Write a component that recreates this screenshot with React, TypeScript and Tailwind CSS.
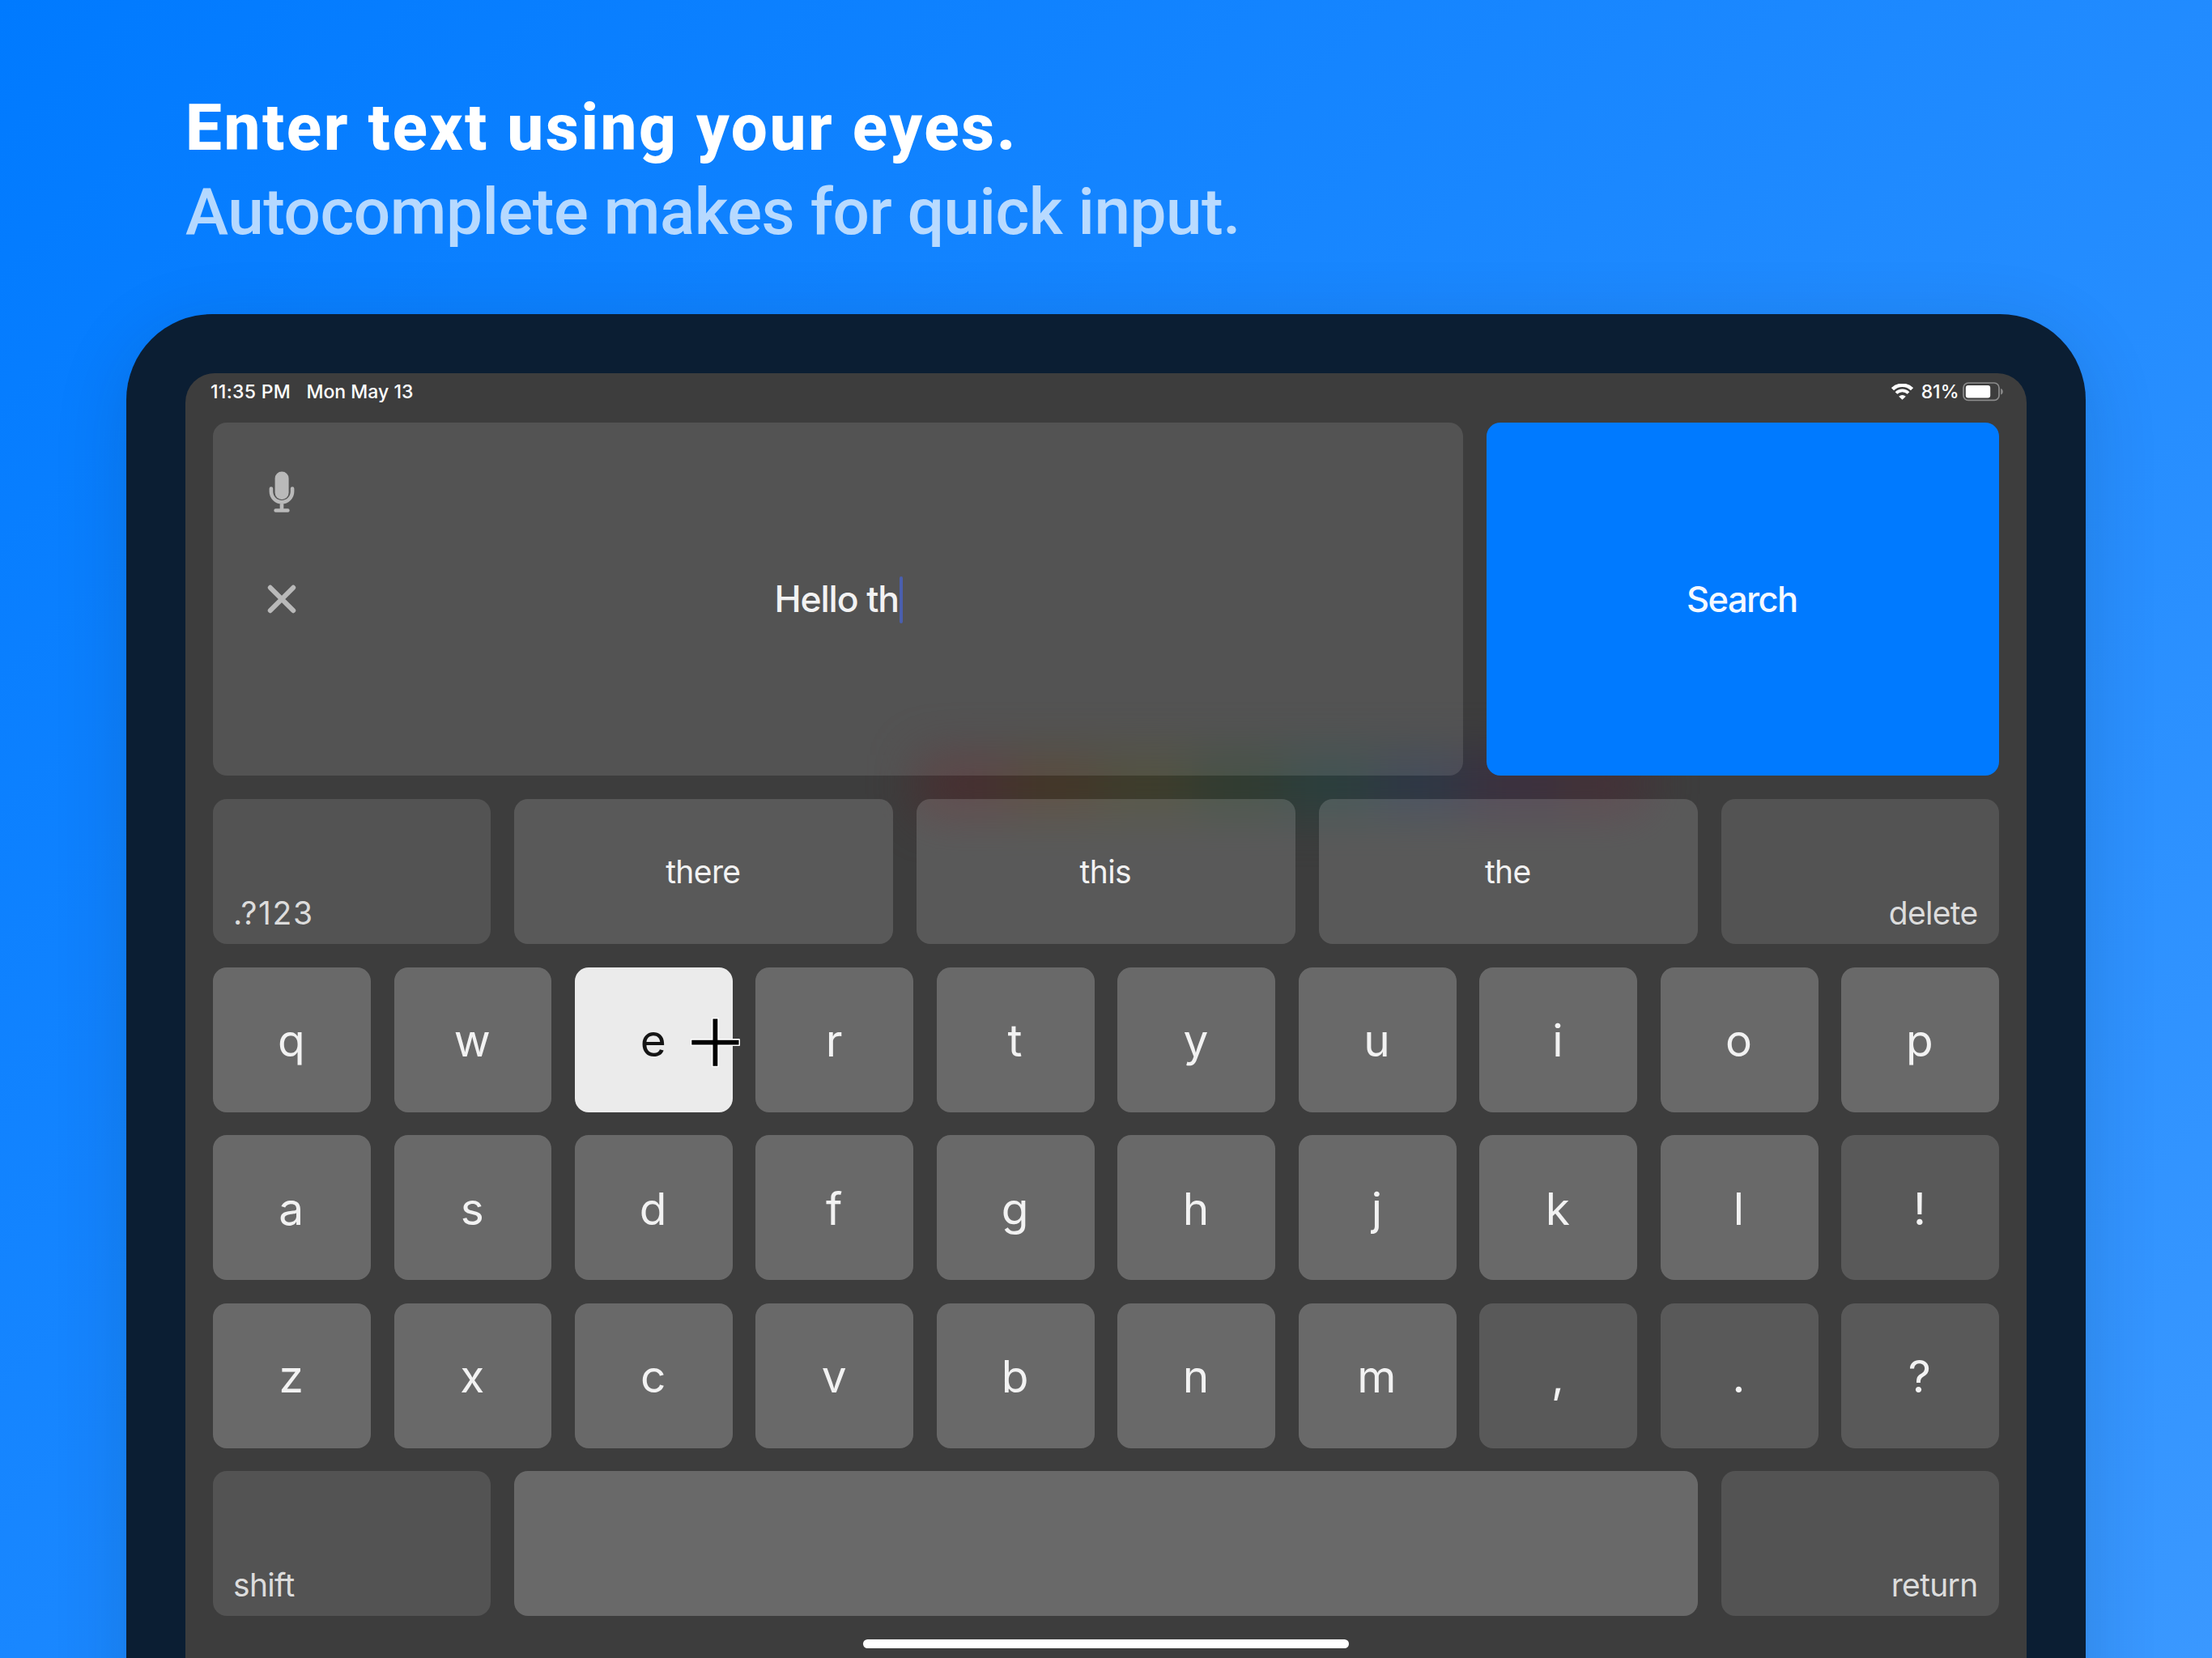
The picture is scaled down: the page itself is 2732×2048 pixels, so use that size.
import React from "react";

type Tone = "letter" | "punct" | "active";

const toneClass: Record<Tone, string> = {
  letter: "bg-white/[0.23] text-[#f2f2f2]",
  punct: "bg-white/[0.15] text-[#f2f2f2]",
  active: "bg-[#ebebeb] text-[#151515]",
};

function Key({ label, tone }: { label: string; tone: Tone }) {
  return (
    <div className={"flex items-center justify-center rounded-[17px] pr-[1.5px] pt-[3px] text-[55px] leading-none " + toneClass[tone]}>
      {label}
    </div>
  );
}

function KeyRow({ keys, punct = [] }: { keys: string[]; punct?: string[] }) {
  return (
    <div className="grid h-[179px] grid-cols-10 gap-[28.6px]">
      {keys.map((k) => (
        <Key key={k} label={k} tone={k === "e" ? "active" : punct.includes(k) ? "punct" : "letter"} />
      ))}
    </div>
  );
}

function ActionKey({ label, align }: { label: string; align: "left" | "right" }) {
  return (
    <div
      className={
        "flex w-[343.2px] items-end rounded-[17px] bg-white/[0.115] pb-[18.4px] pl-[25px] text-[39px] leading-[40px] text-[#dcdcdc] " +
        (align === "right" ? "justify-end pr-[26.5px] " : "justify-start ") +
        (label === ".?123" ? "tracking-[1.6px]" : "tracking-[-0.7px]")
      }
    >
      {label}
    </div>
  );
}

function Suggestion({ label }: { label: string }) {
  return (
    <div className="flex flex-1 items-center justify-center rounded-[17px] bg-white/[0.15] pr-[1.5px] text-[39px] leading-none tracking-[-0.6px] text-[#f2f2f2]">
      {label}
    </div>
  );
}

function MicIcon() {
  return (
    <svg className="h-[52px] w-[32px]" viewBox="0 0 32 52" fill="none">
      <rect x="7.6" y="0.5" width="17" height="34.5" rx="8.5" fill="#b9b9b9" />
      <path d="M2.900 21.500v3.600a13.100 13.100 0 0 0 26.200 0v-3.600M16 39.500v8M8.600 48.500h14.800" stroke="#b9b9b9" strokeWidth="4.600" strokeLinecap="round" />
    </svg>
  );
}

function CloseIcon() {
  return (
    <svg className="h-[36px] w-[36px]" viewBox="0 0 36 36" fill="none">
      <path d="M3.8 3.8l28.4 28.4M32.2 3.8L3.8 32.2" stroke="#b9b9b9" strokeWidth="6" strokeLinecap="round" />
    </svg>
  );
}

function WifiIcon() {
  return (
    <svg className="h-[20px] w-[27px]" viewBox="0 0 27 20" fill="none">
      <path d="M1.5 6.700a17 17 0 0 1 24 0" stroke="#fff" strokeWidth="4.400" />
      <path d="M6 11.5a10.700 10.700 0 0 1 15 0" stroke="#fff" strokeWidth="3.800" />
      <path d="M13.5 19.800L9.200 15.700a6.200 6.200 0 0 1 8.600 0z" fill="#fff" />
    </svg>
  );
}

function BatteryIcon() {
  return (
    <svg className="h-[24px] w-[51px]" viewBox="0 0 51 24" fill="none">
      <rect x="1" y="1" width="44" height="21.4" rx="6" stroke="#8c8c8c" strokeWidth="1.7" />
      <rect x="3.8" y="4" width="30.4" height="15.4" rx="3" fill="#fff" />
      <path d="M47.2 8c3.4 1.2 3.4 6.300 0 7.500z" fill="#8c8c8c" />
    </svg>
  );
}

function GazeCursor() {
  return (
    <svg className="absolute left-[623.5px] top-[796px] h-[61px] w-[61px]" viewBox="0 0 61 61">
      <path
        d="M27.500 1.500h5.800v26.200h26.200v5.800h-26.200v26.200h-5.800v-26.200h-26.200v-5.800h26.200z"
        fill="#000"
        stroke="#fff"
        strokeWidth="3.200"
        strokeLinejoin="round"
        paintOrder="stroke"
      />
    </svg>
  );
}

// Blurred strip of colour that shines through the translucent keys.
const glow = [
  "bg-[#4a2c2e]",
  "bg-[#463522]",
  "bg-[#3e3d26]",
  "bg-[#2d3c2d]",
  "bg-[#263f3d]",
  "bg-[#2a3648]",
  "bg-[#3b2d40]",
  "bg-[#452e36]",
];

export default function App() {
  return (
    <div className="h-[2048px] w-[2732px] overflow-hidden bg-[linear-gradient(135deg,#007aff,#3a98ff)] font-['Inter',sans-serif]">
      <header className="flex h-[388px] flex-col pl-[229px] pt-[106px] font-['Roboto',sans-serif] text-[80px] leading-[104px]">
        <h1 className="whitespace-nowrap font-extrabold tracking-[2.55px] text-white">Enter text using your eyes.</h1>
        <p className="whitespace-nowrap font-medium tracking-[-0.45px] text-white/70">Autocomplete makes for quick input.</p>
      </header>

      <div className="ml-[156px] h-[1800px] w-[2420px] rounded-[106px] bg-[#0b1e33] px-[73px] pt-[73px] shadow-[0_20px_90px_rgba(12,31,52,0.16)]">
        <div className="relative h-[1727px] overflow-hidden rounded-t-[36px] bg-[#3d3d3d]">
          <div className="absolute left-[905px] top-[472px] flex h-[72px] w-[900px] opacity-90 blur-[30px]">
            {glow.map((c) => (
              <div key={c} className={"flex-1 " + c} />
            ))}
          </div>
          <div className="relative flex h-[61px] items-start justify-between pl-[31px] pr-[28px] pt-[11px] text-[23px] font-medium leading-[24px] text-white">
            <div className="flex gap-[19.5px]">
              <span className="tracking-[0.3px]">11:35 PM</span>
              <span>Mon May 13</span>
            </div>
            <div className="flex items-center">
              <WifiIcon />
              <span className="ml-[10px] mr-[4.5px]">81%</span>
              <BatteryIcon />
            </div>
          </div>

          <div className="relative flex flex-col gap-[28.6px] pl-[34.1px] pr-[34px]">
            <div className="flex h-[436.400px] gap-[28.6px]">
              <div className="relative flex flex-1 items-center justify-center rounded-[17px] bg-white/[0.115]">
                <div className="absolute left-[67.2px] top-[59.5px] flex w-[36px] flex-col items-center gap-[88px]">
                  <MicIcon />
                  <CloseIcon />
                </div>
                <div className="flex items-center pl-[1px] pt-[1px] text-[44.5px] font-medium tracking-[-1.1px] text-[#f2f2f2]">
                  <span>Hello th</span>
                  <span className="ml-[1px] h-[58px] w-[4px] rounded-full bg-[#4a5fae]" />
                </div>
              </div>
              <div className="flex w-[633px] items-center justify-center rounded-[17px] bg-[#007aff] pr-[2.5px] pt-[1px] text-[43.5px] font-medium tracking-[-1.6px] text-[#f5f9ff]">
                Search
              </div>
            </div>

            <div className="flex h-[179px] gap-[28.6px]">
              <ActionKey label=".?123" align="left" />
              <Suggestion label="there" />
              <Suggestion label="this" />
              <Suggestion label="the" />
              <ActionKey label="delete" align="right" />
            </div>

            <KeyRow keys={["q", "w", "e", "r", "t", "y", "u", "i", "o", "p"]} />
            <KeyRow keys={["a", "s", "d", "f", "g", "h", "j", "k", "l", "!"]} punct={["!"]} />
            <KeyRow keys={["z", "x", "c", "v", "b", "n", "m", ",", ".", "?"]} punct={[",", ".", "?"]} />

            <div className="flex h-[179px] gap-[28.6px]">
              <ActionKey label="shift" align="left" />
              <div className="flex-1 rounded-[17px] bg-white/[0.23]" />
              <ActionKey label="return" align="right" />
            </div>
          </div>

          <div className="relative mx-auto mt-[28.6px] h-[11px] w-[600px] rounded-full bg-white" />
          <GazeCursor />
        </div>
      </div>
    </div>
  );
}
